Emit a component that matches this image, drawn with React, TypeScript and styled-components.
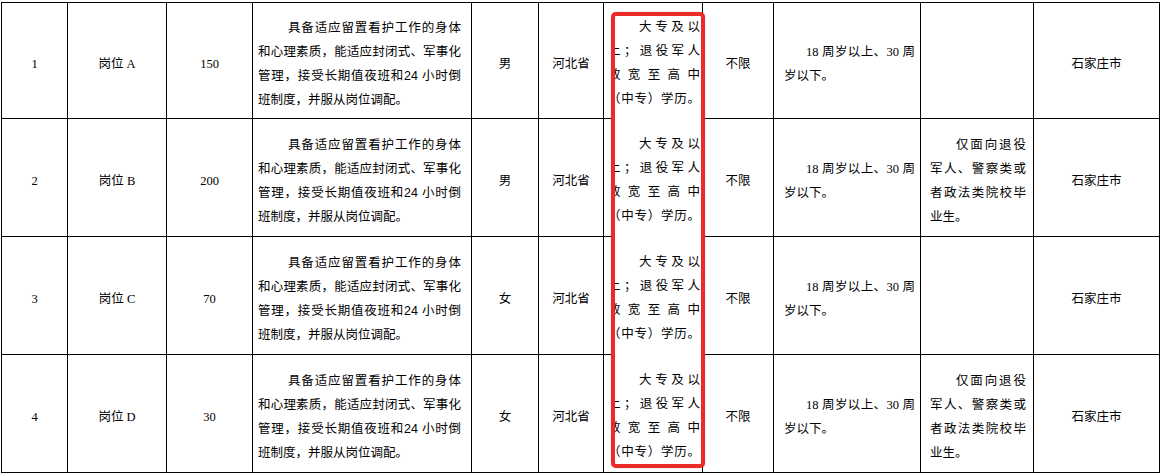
import React from 'react';
import styled, { createGlobalStyle } from 'styled-components';

const GlobalStyle = createGlobalStyle`
  html, body {
    margin: 0;
    padding: 0;
    background: #fff;
  }
  body {
    font-family: "Liberation Serif", "Noto Sans CJK SC", serif;
    color: #000;
  }
`;

const Page = styled.div`
  width: 1162px;
  height: 474px;
  overflow: hidden;
  padding: 2px 0 0 1px;
  box-sizing: border-box;
`;

const Sheet = styled.div`
  position: relative;
  width: 1158px;
`;

const Table = styled.table`
  border-collapse: collapse;
  table-layout: fixed;
  width: 1158px;
  font-size: 12.5px;
  line-height: 24px;
`;

const Row = styled.tr<{ $h: number }>`
  height: ${p => p.$h}px;
`;

const Cell = styled.td<{ $pl?: number; $pr?: number }>`
  border: 1px solid #000;
  padding: 6px ${p => p.$pr ?? 0}px 0 ${p => p.$pl ?? 0}px;
  text-align: center;
  vertical-align: middle;
  overflow: hidden;
`;

const Para = styled.div`
  text-align: left;
`;

const Line = styled.span<{ $indent: number; $justify: boolean }>`
  display: block;
  padding-left: ${p => p.$indent}px;
  text-align: ${p => (p.$justify ? 'justify' : 'left')};
  text-align-last: ${p => (p.$justify ? 'justify' : 'left')};
`;

const Sans = styled.span`
  font-family: "Liberation Sans", "Noto Sans CJK SC", sans-serif;
`;

// red annotation frame pasted over the education column
const Highlight = styled.div`
  position: absolute;
  left: 610px;
  top: 10px;
  width: 94px;
  height: 456px;
  box-sizing: border-box;
  border: 4px solid #ec2a2a;
  border-radius: 5px;
  background: #fff;
  overflow: hidden;
  box-shadow: 0 0 1px rgba(220, 30, 30, 0.6);
`;

const HighlightStack = styled.div`
  margin: -14px 0 0 -7px;
  width: 92px;
`;

const HighlightRow = styled.div<{ $h: number }>`
  height: ${p => p.$h}px;
  padding-top: 6px;
  box-sizing: border-box;
  display: flex;
  align-items: center;
  font-size: 12.5px;
  line-height: 24px;
  > div {
    width: 92px;
  }
`;

type LinesProps = { lines: React.ReactNode[]; indent: number; justifyLast?: boolean };

function Lines({ lines, indent, justifyLast }: LinesProps) {
  return (
    <Para>
      {lines.map((l, i) => (
        <Line key={i} $indent={i === 0 ? indent : 0} $justify={i < lines.length - 1 || !!justifyLast}>
          {l}
        </Line>
      ))}
    </Para>
  );
}

const duty: React.ReactNode[] = [
  '具备适应留置看护工作的身体',
  '和心理素质，能适应封闭式、军事化',
  <>管理，接受长期值夜班和<Sans>24</Sans> 小时倒</>,
  '班制度，并服从岗位调配。',
];

const education = ['大专及以', '上；退役军人', '放宽至高中', '（中专）学历。'];
const age = ['18 周岁以上、30 周', '岁以下。'];
const note = ['仅面向退役', '军人、警察类或', '者政法类院校毕', '业生。'];

const rows = [
  { no: '1', post: 'A', count: '150', gender: '男', note: false, h: 116 },
  { no: '2', post: 'B', count: '200', gender: '男', note: true, h: 118 },
  { no: '3', post: 'C', count: '70', gender: '女', note: false, h: 118 },
  { no: '4', post: 'D', count: '30', gender: '女', note: true, h: 118 },
];

const widths = [66, 99, 86, 219, 67, 65, 99, 71, 147, 113, 126];

export default function App() {
  return (
    <Page>
      <GlobalStyle />
      <Sheet>
        <Table>
          <colgroup>
            {widths.map((w, i) => (
              <col key={i} style={{ width: w }} />
            ))}
          </colgroup>
          <tbody>
            {rows.map(r => (
              <Row key={r.no} $h={r.h}>
                <Cell>{r.no}</Cell>
                <Cell>岗位 {r.post}</Cell>
                <Cell>{r.count}</Cell>
                <Cell $pl={5} $pr={10}>
                  <Lines lines={duty} indent={30} />
                </Cell>
                <Cell>{r.gender}</Cell>
                <Cell>河北省</Cell>
                <Cell />
                <Cell>不限</Cell>
                <Cell $pl={10} $pr={5}>
                  <Lines lines={age} indent={22} />
                </Cell>
                <Cell $pl={9} $pr={7}>
                  {r.note && <Lines lines={note} indent={26} />}
                </Cell>
                <Cell>石家庄市</Cell>
              </Row>
            ))}
          </tbody>
        </Table>
        <Highlight>
          <HighlightStack>
            {rows.map(r => (
              <HighlightRow key={r.no} $h={r.h}>
                <Lines lines={education} indent={31} justifyLast />
              </HighlightRow>
            ))}
          </HighlightStack>
        </Highlight>
      </Sheet>
    </Page>
  );
}
